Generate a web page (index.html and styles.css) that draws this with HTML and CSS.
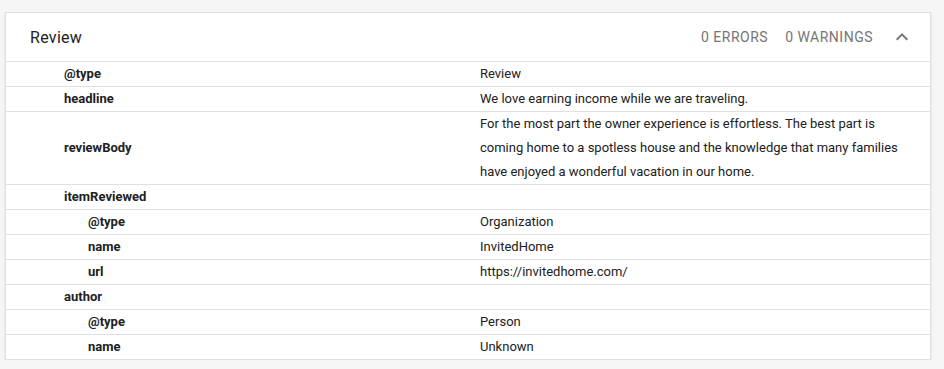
FILE: index.html
```html
<!DOCTYPE html>
<html>
<head>
<meta charset="utf-8">
<link rel="stylesheet" href="styles.css">
</head>
<body>
<div class="card">
  <div class="header">
    <div class="title">Review</div>
    <div class="status">
      <span class="count">0 ERRORS</span>
      <span class="count">0 WARNINGS</span>
      <svg class="chev" width="24" height="24" viewBox="0 0 24 24"><path d="M12 8l-6 6 1.41 1.41L12 10.83l4.59 4.58L18 14z" fill="#757575"/></svg>
    </div>
  </div>
  <div class="rows">
    <div class="row"><div class="key">@type</div><div class="val">Review</div></div>
    <div class="row"><div class="key">headline</div><div class="val">We love earning income while we are traveling.</div></div>
    <div class="row"><div class="key">reviewBody</div><div class="val">For the most part the owner experience is effortless. The best part is coming home to a spotless house and the knowledge that many families have enjoyed a wonderful vacation in our home.</div></div>
    <div class="row"><div class="key">itemReviewed</div><div class="val"></div></div>
    <div class="row"><div class="key sub">@type</div><div class="val">Organization</div></div>
    <div class="row"><div class="key sub">name</div><div class="val">InvitedHome</div></div>
    <div class="row"><div class="key sub">url</div><div class="val">https://invitedhome.com/</div></div>
    <div class="row"><div class="key">author</div><div class="val"></div></div>
    <div class="row"><div class="key sub">@type</div><div class="val">Person</div></div>
    <div class="row"><div class="key sub">name</div><div class="val">Unknown</div></div>
  </div>
</div>
</body>
</html>
```
FILE: styles.css
```css
html, body {
  margin: 0;
  background: #f5f5f5;
}
body {
  padding: 12px 13px 0 5px;
  font-family: Roboto, "Liberation Sans", sans-serif;
  color: #212121;
}
.card {
  background: #fff;
  border: 1px solid #e0e0e0;
  box-shadow: 0 2px 2px rgba(0,0,0,0.12);
}
.header {
  height: 48px;
  display: flex;
  align-items: center;
  justify-content: space-between;
  padding: 0 16px 0 24px;
  border-bottom: 1px solid #e0e0e0;
}
.title {
  font-size: 16px;
  letter-spacing: 0.3px;
  color: #212121;
}
.status {
  display: flex;
  align-items: center;
  gap: 17px;
}
.count {
  font-size: 14px;
  letter-spacing: 0.5px;
  color: #757575;
}
.chev {
  display: block;
}
.row {
  display: flex;
  border-bottom: 1px solid #e0e0e0;
  font-size: 13px;
  line-height: 24px;
}
.row:last-child {
  border-bottom: none;
}
.key {
  width: 474px;
  box-sizing: border-box;
  padding-left: 58px;
  font-weight: bold;
  display: flex;
  align-items: center;
  flex: none;
}
.key.sub {
  padding-left: 82px;
}
.val {
  flex: 1;
  padding-right: 24px;
  min-height: 24px;
}
```
